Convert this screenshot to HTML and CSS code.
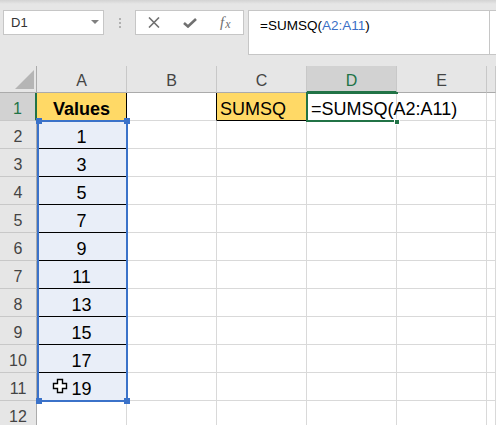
FILE: index.html
```html
<!DOCTYPE html>
<html>
<head>
<meta charset="utf-8">
<link rel="stylesheet" href="styles.css">
</head>
<body>
<div class="top">
  <div class="namebox"><span>D1</span><svg class="dd" width="8" height="4" viewBox="0 0 8 4"><path d="M0 0H8L4 4Z" fill="#808080"/></svg></div>
  <div class="dots"><svg width="2" height="10" viewBox="0 0 2 10"><rect x="0" y="0" width="2" height="2" fill="#b0b0b0"/><rect x="0" y="4" width="2" height="2" fill="#b0b0b0"/><rect x="0" y="8" width="2" height="2" fill="#b0b0b0"/></svg></div>
  <div class="fxbox">
    <svg width="12" height="11" viewBox="0 0 12 11"><path d="M1 0.5L11 10.5M11 0.5L1 10.5" stroke="#707070" stroke-width="1.6" fill="none"/></svg>
    <svg width="14" height="10" viewBox="0 0 14 10"><path d="M1 5L5 8.5L13 1" stroke="#707070" stroke-width="2.6" fill="none"/></svg>
    <span class="fx">f<span class="fxx">x</span></span>
  </div>
  <div class="formula"><span>=SUMSQ(<span class="ref">A2:A11</span>)</span><div class="fend"></div></div>
</div>
<div class="sheet">
  <div class="corner"><svg width="19" height="19" viewBox="0 0 19 19"><path d="M19 0V19H0Z" fill="#b5b5b5"/></svg></div>
  <div class="hd">A</div><div class="hd">B</div><div class="hd">C</div><div class="hd sel">D</div><div class="hd">E</div><div class="hd"></div>

  <div class="rh sel">1</div><div class="c val">Values</div><div class="c bb"></div><div class="c yel">SUMSQ</div><div class="c f">=SUMSQ(A2:A11)</div><div class="c"></div><div class="c"></div>
  <div class="rh">2</div><div class="c rng">1</div><div class="c"></div><div class="c"></div><div class="c"></div><div class="c"></div><div class="c"></div>
  <div class="rh">3</div><div class="c rng">3</div><div class="c"></div><div class="c"></div><div class="c"></div><div class="c"></div><div class="c"></div>
  <div class="rh">4</div><div class="c rng">5</div><div class="c"></div><div class="c"></div><div class="c"></div><div class="c"></div><div class="c"></div>
  <div class="rh">5</div><div class="c rng">7</div><div class="c"></div><div class="c"></div><div class="c"></div><div class="c"></div><div class="c"></div>
  <div class="rh">6</div><div class="c rng">9</div><div class="c"></div><div class="c"></div><div class="c"></div><div class="c"></div><div class="c"></div>
  <div class="rh">7</div><div class="c rng">11</div><div class="c"></div><div class="c"></div><div class="c"></div><div class="c"></div><div class="c"></div>
  <div class="rh">8</div><div class="c rng">13</div><div class="c"></div><div class="c"></div><div class="c"></div><div class="c"></div><div class="c"></div>
  <div class="rh">9</div><div class="c rng">15</div><div class="c"></div><div class="c"></div><div class="c"></div><div class="c"></div><div class="c"></div>
  <div class="rh">10</div><div class="c rng">17</div><div class="c"></div><div class="c"></div><div class="c"></div><div class="c"></div><div class="c"></div>
  <div class="rh">11</div><div class="c rng">19</div><div class="c"></div><div class="c"></div><div class="c"></div><div class="c"></div><div class="c"></div>
  <div class="rh">12</div><div class="c"></div><div class="c"></div><div class="c"></div><div class="c"></div><div class="c"></div><div class="c"></div>

  <div class="range"><i class="h tl"></i><i class="h tr"></i><i class="h bl"></i><i class="h br"></i></div>
  <div class="active"></div>
  <div class="fill"></div>
  <svg class="cursor" width="16" height="16" viewBox="0 0 16 16"><path d="M5.5 1.5H10.5V5.5H14.5V10.5H10.5V14.5H5.5V10.5H1.5V5.5H5.5Z" fill="#fff" stroke="#000" stroke-width="1.4"/></svg>
</div>
</body>
</html>
```
FILE: styles.css
```css
* { box-sizing: border-box; }
html, body { margin: 0; padding: 0; }
body {
  width: 496px;
  height: 425px;
  overflow: hidden;
  background: #e6e6e6;
  font-family: "Liberation Sans", Arial, sans-serif;
}
.top {
  height: 66px;
  display: flex;
  align-items: flex-start;
  padding-top: 10px;
  background: linear-gradient(#d3d3d3 0, #e6e6e6 4px);
}
.namebox {
  margin-left: 3px;
  width: 101px;
  height: 25px;
  background: #fff;
  border: 1px solid #c6c6c6;
  display: flex;
  align-items: center;
  justify-content: space-between;
  padding: 0 4px 0 7px;
  font-size: 13px;
  color: #333;
}
.dd { margin-top: -1px; }
.dots {
  width: 31px;
  height: 25px;
  display: flex;
  align-items: center;
  justify-content: center;
}
.fxbox {
  width: 109px;
  height: 25px;
  background: #fff;
  border: 1px solid #c6c6c6;
  display: flex;
  align-items: center;
  gap: 23px;
  padding-left: 12px;
}
.fx {
  font-family: "Liberation Serif", serif;
  font-style: italic;
  font-size: 15px;
  color: #707070;
  line-height: 1;
}
.fxx { font-size: 12px; position: relative; top: 1px; margin-left: 1px; }
.formula {
  margin-left: 4px;
  flex: 1;
  height: 45px;
  background: #fff;
  border: 1px solid #c6c6c6;
  border-right: none;
  display: flex;
  justify-content: space-between;
  padding: 7px 0 0 11px;
  font-size: 13.5px;
  line-height: 16px;
  color: #000;
}
.formula .ref { color: #3a6fc6; }
.fend {
  width: 7px;
  margin-top: -8px;
  height: 44px;
  border-left: 1px solid #c6c6c6;
}
.sheet {
  position: relative;
  display: grid;
  grid-template-columns: 37px repeat(5, 90px) 1fr;
  grid-template-rows: 27px repeat(12, 28px);
  background: #fff;
}
.corner {
  background: #e6e6e6;
  border-right: 1px solid #ababab;
  border-bottom: 1px solid #ababab;
  display: flex;
  align-items: flex-end;
  justify-content: flex-end;
  padding: 0 2px 3px 0;
}
.hd {
  background: #e6e6e6;
  border-right: 1px solid #c8c8c8;
  border-bottom: 1px solid #ababab;
  text-align: center;
  font-size: 16px;
  color: #444;
  padding-top: 3px;
  line-height: 24px;
}
.hd.sel {
  background: #d2d2d2;
  border-bottom: 2px solid #217346;
  color: #217346;
}
.rh {
  background: #e6e6e6;
  border-right: 1px solid #ababab;
  border-bottom: 1px solid #c8c8c8;
  text-align: center;
  font-size: 16px;
  color: #444;
  padding-top: 4px;
  line-height: 24px;
}
.rh.sel {
  background: #d2d2d2;
  border-right: 2px solid #217346;
  color: #217346;
}
.c {
  border-right: 1px solid #d9d9d9;
  border-bottom: 1px solid #d9d9d9;
  font-size: 18px;
  padding-top: 4px;
  line-height: 24px;
  white-space: nowrap;
  color: #000;
}
.c.val {
  background: #ffd966;
  font-weight: bold;
  text-align: center;
  border-right-color: #000;
  border-bottom-color: #000;
}
.c.rng {
  background: #e9eef8;
  text-align: center;
  border-right-color: #000;
  border-bottom-color: #000;
}
.c.bb { border-right-color: #000; }
.c.yel {
  background: #ffd966;
  border-bottom-color: #000;
  padding-left: 3px;
}
.c.f {
  padding-left: 4px;
  position: relative;
  z-index: 1;
}
.range {
  position: absolute;
  left: 37px;
  top: 54px;
  width: 91px;
  height: 282px;
  border: 2px solid #3b72c9;
  z-index: 2;
}
.h {
  position: absolute;
  width: 6px;
  height: 6px;
  background: #3b72c9;
}
.h.tl { left: -3px; top: -4px; }
.h.tr { right: -4px; top: -4px; }
.h.bl { left: -3px; bottom: -4px; }
.h.br { right: -4px; bottom: -4px; }
.active {
  position: absolute;
  left: 306px;
  top: 26px;
  width: 92px;
  height: 30px;
  border: 2px solid #217346;
  border-right: none;
  z-index: 2;
}
.fill {
  position: absolute;
  left: 394px;
  top: 53px;
  width: 6px;
  height: 6px;
  background: #217346;
  border: 1px solid #fff;
  z-index: 3;
}
.cursor {
  position: absolute;
  left: 52px;
  top: 312px;
  z-index: 4;
}
```
